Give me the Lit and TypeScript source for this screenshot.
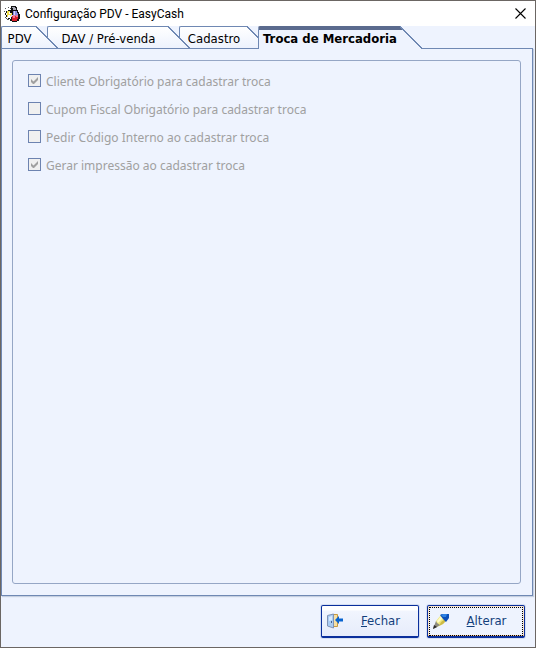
import { LitElement, html, css, svg } from "lit";
import { customElement } from "lit/decorators.js";
import { classMap } from "lit/directives/class-map.js";

const tabs = [
  { id: "pdv", label: "PDV" },
  { id: "dav", label: "DAV / Pré-venda" },
  { id: "cadastro", label: "Cadastro" },
  { id: "troca", label: "Troca de Mercadoria" },
];

const options = [
  { label: "Cliente Obrigatório para cadastrar troca", checked: true },
  { label: "Cupom Fiscal Obrigatório para cadastrar troca", checked: false },
  { label: "Pedir Código Interno ao cadastrar troca", checked: false },
  { label: "Gerar impressão ao cadastrar troca", checked: true },
];

const appIcon = svg`<svg width="16" height="16" viewBox="0 0 16 16" aria-hidden="true" shape-rendering="crispEdges">
  <path d="M7 0h5v1h1v3h1v2h1v2h1v5h-1v2h-2v1H8v-1H6v-2H4v-2H2V9H1V7h1V5h2V4h3z" fill="#111"/>
  <path d="M1 2h1v1H1zM4 1h1v1H4zM0 5h1v1H0zM1 11h1v1H1zM3 13h2v1H3zM6 2h1v1H6zM2 12h1v1H2z" fill="#555"/>
  <path d="M8 1h3v1H8zM9 2h3v2H9z" fill="#a9a9b4"/>
  <path d="M3 5h3v2h2v3H6v1H3z" fill="#f4e04a"/>
  <path d="M2 7h1v2H2zM5 6h1v1h1v1H5zM4 9h2v3H4zM6 10h1v3H6z" fill="#fff"/>
  <path d="M9 5h4v2h1v3H9z" fill="#8a8fe0"/>
  <path d="M10 5h1v4h-1zM7 9h2v2H7z" fill="#d8d8f8"/>
  <path d="M8 10h6v3h-1v2H8z" fill="#d8202c"/>
  <path d="M9 9h2v3H9zM12 9h2v2h-2z" fill="#f47a90"/>
</svg>`;

const doorIcon = svg`<svg width="16" height="16" viewBox="0 0 16 16" aria-hidden="true">
  <path d="M5 1.500h5.500v12H5z" fill="#f6dfa4" stroke="#c79a42"/>
  <path d="M.5 2.500L6.500 1v14L.5 13z" fill="#a9cbf3" stroke="#7f93b5"/>
  <path d="M2 4l3-1v4l-3 1z" fill="#d9eafd"/>
  <path d="M4 8h1v2H4z" fill="#44618f"/>
  <path d="M8 7l4-4v2.500h4v3h-4V11z" fill="#0763cf"/>
</svg>`;

const pencilIcon = svg`<svg width="16" height="16" viewBox="0 0 16 16" aria-hidden="true">
  <path d="M3 8l5-6 5 5-3 4-6 3z" fill="#efe87e"/>
  <path d="M4 8l4-5 2 2-5 5z" fill="#fffccb"/>
  <path d="M8 9l4-3 1 2-3 3-4 2z" fill="#cdbb48"/>
  <path d="M7 2l2-1h7v4l-3 4-3-3z" fill="#0d50b8"/>
  <path d="M8 2l2-1h4l-1 3h-3z" fill="#2f83e4"/>
  <path d="M3 8l1 2 3 2-3 2-4 2z" fill="#8d8b80"/>
  <path d="M1 12l3 2-4 2z" fill="#2b2b2b"/>
</svg>`;

@customElement("app-root")
export class AppRoot extends LitElement {
  static styles = css`
    :host {
      display: block;
      --line: #6f88b3;
      --face: #eef3fe;
      font: 13px/16px "DejaVu Sans Condensed", "DejaVu Sans", sans-serif;
      font-stretch: condensed;
      color: #000;
    }
    .window {
      box-sizing: border-box;
      min-height: 100vh;
      display: flex;
      flex-direction: column;
      border: 1px solid #6b6663;
      background: var(--face);
    }
    .titlebar {
      display: flex;
      align-items: center;
      height: 25px;
      padding-left: 3px;
      background: #fff;
    }
    .title {
      flex: 1;
      margin: 0 0 0 5px;
      font: 12px/16px Roboto, sans-serif;
    }
    button {
      font: inherit;
      font-stretch: inherit;
      margin: 0;
      border: 0;
      padding: 0;
      background: none;
      color: inherit;
    }
    svg {
      display: block;
      flex: none;
    }
    .close {
      width: 30px;
      height: 24px;
      display: grid;
      place-items: center;
    }
    .tabs {
      display: flex;
      height: 22px;
    }
    .tab {
      position: relative;
      display: flex;
      height: 22px;
      margin-right: -11px;
      white-space: nowrap;
    }
    .face {
      box-sizing: border-box;
      height: 22px;
      padding: 4px 0 0 1px;
      border: solid var(--line);
      border-width: 1px 0 0 1px;
      border-radius: 2px 0 0 0;
      background: linear-gradient(#fff, #edf2fd);
      text-align: center;
    }
    .pdv { z-index: 3; }
    .dav { z-index: 2; }
    .cadastro { z-index: 1; }
    .troca { z-index: 4; }
    .pdv .face { width: 35px; }
    .dav .face { width: 121px; }
    .cadastro .face { width: 68px; }
    .troca .face { width: 142px; }
    .active,
    .active .face {
      height: 23px;
    }
    .active .face {
      padding-top: 1px;
      border-top: 4px solid #5b6b8e;
      background: var(--face);
      font-weight: bold;
    }
    .page {
      flex: 1;
      display: flex;
      margin-right: 2px;
      padding: 11px 11px 11px 10px;
      border: 1px solid var(--line);
      box-shadow: 1px 1px 1px #c5cfe0;
    }
    .group {
      flex: 1;
      display: flex;
      flex-direction: column;
      gap: 10px;
      margin: 0;
      padding: 12px 15px;
      border: 1px solid #95a6c5;
      border-radius: 3px;
    }
    .option {
      display: flex;
      gap: 5px;
      font: 12px/18px "Noto Sans", sans-serif;
      color: #a0a0a0;
    }
    .check {
      position: relative;
      width: 13px;
      height: 13px;
      margin-top: 1px;
    }
    .check input {
      appearance: none;
      display: block;
      box-sizing: border-box;
      width: 13px;
      height: 13px;
      margin: 0;
      border: 1px solid #6d83b0;
      background: #f0f0f0;
    }
    .check svg {
      position: absolute;
      inset: 0;
    }
    .actions {
      display: flex;
      justify-content: flex-end;
      gap: 8px;
      padding: 9px 10px;
    }
    .action {
      box-sizing: border-box;
      width: 98px;
      height: 33px;
      display: flex;
      align-items: center;
      padding: 0 4px 0 5px;
      border: 1px solid #0a2f9c;
      border-bottom-width: 2px;
      border-radius: 2px;
      background: linear-gradient(#fff 4px, #f1f5fe 5px, #e6ecfb);
      box-shadow: 0 0 0 1px #d5dff2;
      color: #133f7c;
    }
    .action span {
      flex: 1;
      padding-left: 4px;
      text-align: center;
    }
    .default {
      background: var(--face);
      box-shadow: 0 0 0 1px #d5dff2, inset 0 -1px #f5c08a, inset 0 0 0 1px #fbe3c6;
      outline: 1px dotted #000;
      outline-offset: -3px;
    }
  `;

  render() {
    return html`
      <div class="window">
        <header class="titlebar">
          ${appIcon}
          <h1 class="title">Configuração PDV - EasyCash</h1>
          <button class="close" aria-label="Fechar janela">
            <svg width="11" height="11" viewBox="0 0 11 11"><path d="M.5 .5l10 10M10.500 .5l-10 10" stroke="#000" stroke-width="1.100"/></svg>
          </button>
        </header>
        <nav class="tabs" role="tablist">
          ${tabs.map((t) => {
            const active = t.id === "troca";
            return html`<button role="tab" aria-selected=${active} class=${classMap({ tab: true, [t.id]: true, active })}>
              <div class="face">${t.label}</div>
              <svg width="22" height="23" viewBox="0 0 22 23" shape-rendering="crispEdges">
                <defs><linearGradient id="slant" gradientUnits="userSpaceOnUse" x1="0" y1="0" x2="0" y2="22"><stop stop-color="#fff"/><stop offset="1" stop-color="#edf2fd"/></linearGradient></defs>
                <path d=${active ? "M0 0L22 23H0z" : "M0 0L22 22H0z"} fill=${active ? "#eef3fe" : "url(#slant)"}/>
                ${active ? svg`<path d="M0 0h1l3 4H0z" fill="#5b6b8e"/>` : ""}
                <path d="M0 .5L22 22.500" stroke="#6f88b3" fill="none"/>
              </svg>
            </button>`;
          })}
        </nav>
        <main class="page">
          <div class="group">
            ${options.map((o) => html`<label class="option">
              <span class="check">
                <input type="checkbox" disabled .checked=${o.checked} />
                ${o.checked ? html`<svg width="13" height="13" viewBox="0 0 13 13"><path d="M3 5v3l2 2h1l4-4V3L5.500 7.500z" fill="#a0a0a0"/></svg>` : ""}
              </span>
              <span>${o.label}</span>
            </label>`)}
          </div>
        </main>
        <footer class="actions">
          <button class="action">${doorIcon}<span><u>F</u>echar</span></button>
          <button class="action default">${pencilIcon}<span><u>A</u>lterar</span></button>
        </footer>
      </div>
    `;
  }
}
